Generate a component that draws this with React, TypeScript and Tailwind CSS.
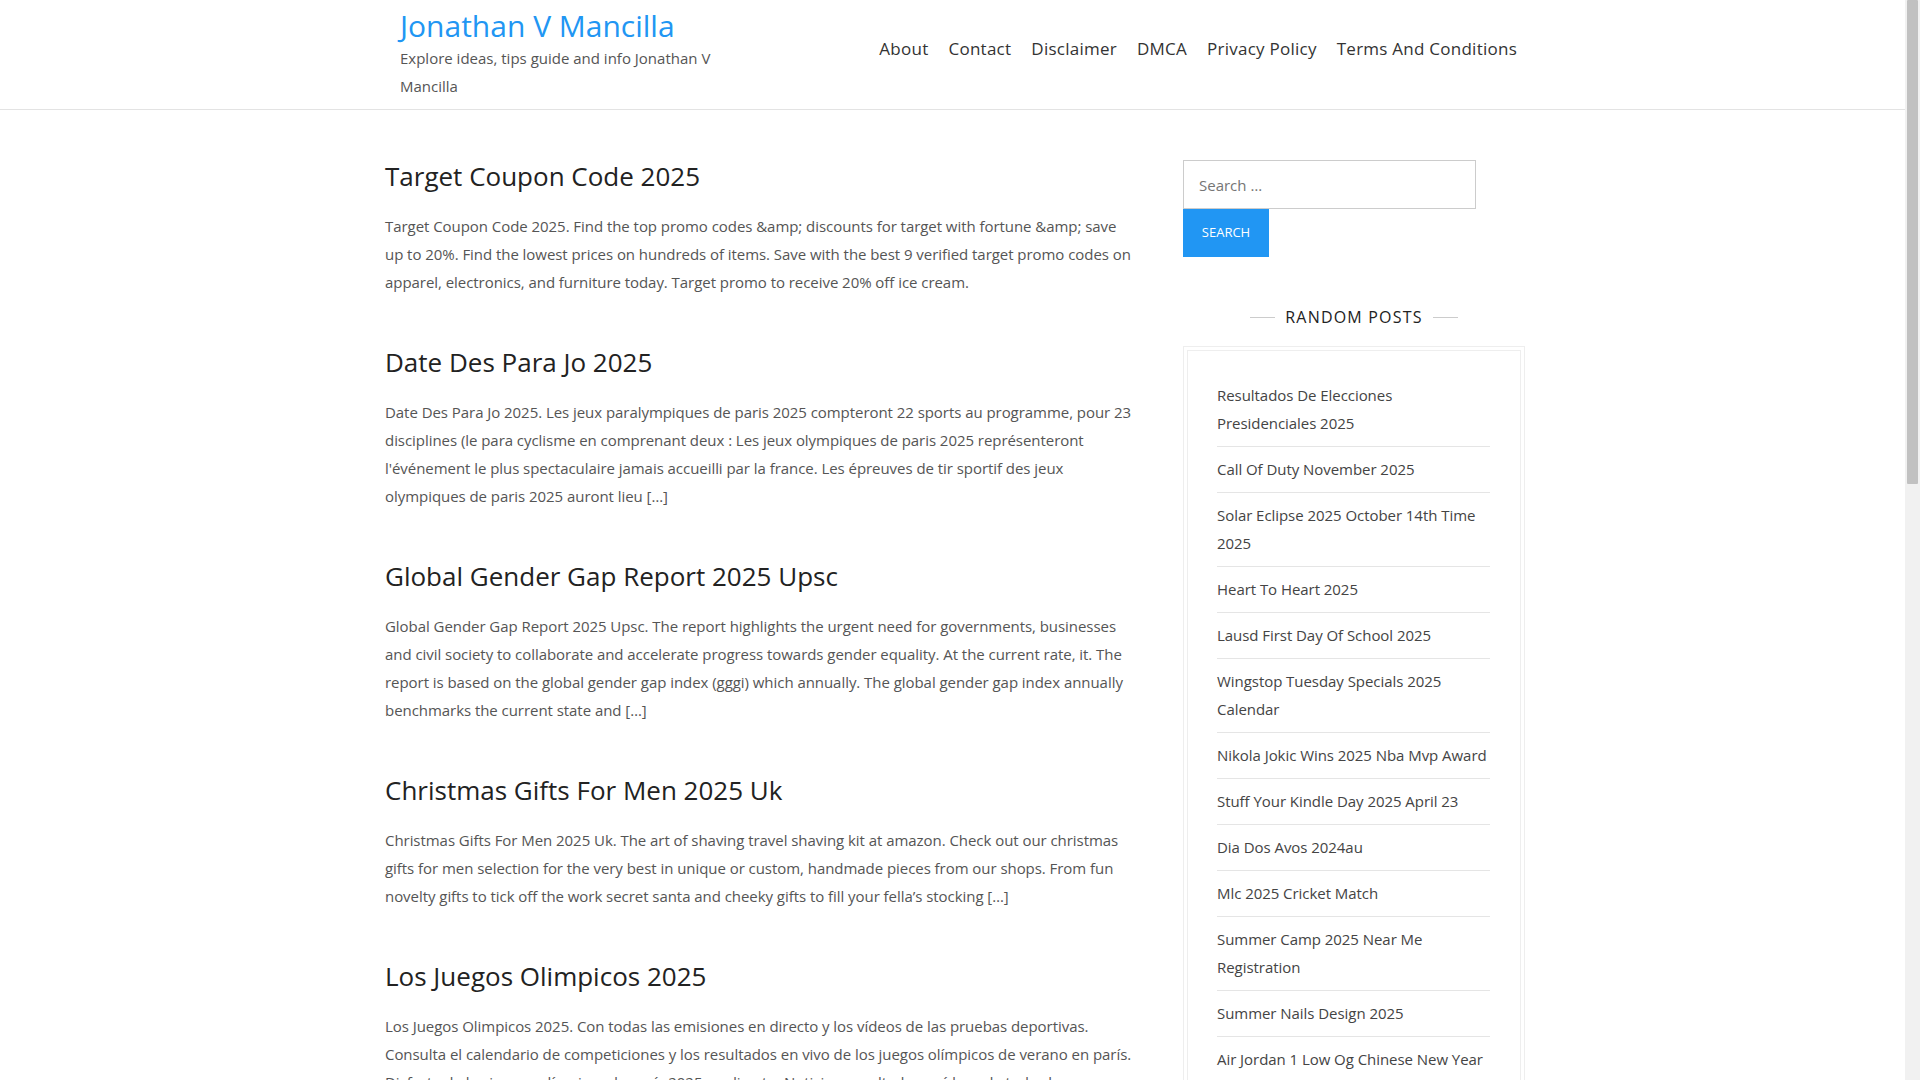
const FONT = { fontFamily: '"Open Sans", "Noto Sans", Arial, sans-serif' };

const NAV = ["About", "Contact", "Disclaimer", "DMCA", "Privacy Policy", "Terms And Conditions"];

const POSTS = [
  {
    title: "Target Coupon Code 2025",
    body: "Target Coupon Code 2025. Find the top promo codes &amp; discounts for target with fortune &amp; save up to 20%. Find the lowest prices on hundreds of items. Save with the best 9 verified target promo codes on apparel, electronics, and furniture today. Target promo to receive 20% off ice cream.",
  },
  {
    title: "Date Des Para Jo 2025",
    body: "Date Des Para Jo 2025. Les jeux paralympiques de paris 2025 compteront 22 sports au programme, pour 23 disciplines (le para cyclisme en comprenant deux : Les jeux olympiques de paris 2025 représenteront l'événement le plus spectaculaire jamais accueilli par la france. Les épreuves de tir sportif des jeux olympiques de paris 2025 auront lieu […]",
  },
  {
    title: "Global Gender Gap Report 2025 Upsc",
    body: "Global Gender Gap Report 2025 Upsc. The report highlights the urgent need for governments, businesses and civil society to collaborate and accelerate progress towards gender equality. At the current rate, it. The report is based on the global gender gap index (gggi) which annually. The global gender gap index annually benchmarks the current state and […]",
  },
  {
    title: "Christmas Gifts For Men 2025 Uk",
    body: "Christmas Gifts For Men 2025 Uk. The art of shaving travel shaving kit at amazon. Check out our christmas gifts for men selection for the very best in unique or custom, handmade pieces from our shops. From fun novelty gifts to tick off the work secret santa and cheeky gifts to fill your fella’s stocking […]",
  },
  {
    title: "Los Juegos Olimpicos 2025",
    body: "Los Juegos Olimpicos 2025. Con todas las emisiones en directo y los vídeos de las pruebas deportivas. Consulta el calendario de competiciones y los resultados en vivo de los juegos olímpicos de verano en parís. Disfruta de los juegos olímpicos de parís 2025 en directo. Noticias, resultados y vídeos de todas las disciplinas […]",
  },
];

const RANDOM = [
  "Resultados De Elecciones Presidenciales 2025",
  "Call Of Duty November 2025",
  "Solar Eclipse 2025 October 14th Time 2025",
  "Heart To Heart 2025",
  "Lausd First Day Of School 2025",
  "Wingstop Tuesday Specials 2025 Calendar",
  "Nikola Jokic Wins 2025 Nba Mvp Award",
  "Stuff Your Kindle Day 2025 April 23",
  "Dia Dos Avos 2024au",
  "Mlc 2025 Cricket Match",
  "Summer Camp 2025 Near Me Registration",
  "Summer Nails Design 2025",
  "Air Jordan 1 Low Og Chinese New Year",
  "Ramadan 2025 Calendar Dubai",
];

export default function App() {
  return (
    <div className="min-h-screen w-[1910px] bg-white text-[#555]" style={FONT}>
      <header className="border-b border-[#e3e3e3]">
        <div className="mx-auto flex w-[1140px] items-start">
          <div className="w-[332px] pl-[15px] pt-[8px] pb-[9px]">
            <a className="block text-[30px] font-medium leading-[36px] text-[#2196f3]">
              Jonathan V Mancilla
            </a>
            <p className="text-[15px] leading-[28px] text-[#555]">
              Explore ideas, tips guide and info Jonathan V Mancilla
            </p>
          </div>
          <nav className="ml-auto flex gap-[20px] pr-[8px] pt-[37px]">
            {NAV.map((item) => (
              <a key={item} className="text-[17px] font-medium leading-[24px] tracking-[0.25px] text-[#333]">
                {item}
              </a>
            ))}
          </nav>
        </div>
      </header>

      <div className="mx-auto flex w-[1140px]">
        <main className="w-[750px] pt-[50px]">
          {POSTS.map((post) => (
            <article key={post.title} className="mb-[50px]">
              <h2 className="text-[26px] font-medium leading-[32px] text-[#222]">{post.title}</h2>
              <p className="mt-[20px] text-[15px] leading-[28px] tracking-[-0.05px] text-[#555]">{post.body}</p>
            </article>
          ))}
        </main>

        <aside className="ml-auto w-[342px] pt-[50px]">
          <form className="flex flex-col items-start">
            <input
              type="search"
              placeholder="Search …"
              className="h-[49px] w-[293px] border border-[#ccc] px-[15px] text-[15px] text-[#555] outline-none placeholder:text-[#757575]"
              style={FONT}
            />
            <button
              type="button"
              className="h-[48px] w-[86px] bg-[#2196f3] text-[13px] font-medium uppercase text-white"
              style={FONT}
            >
              Search
            </button>
          </form>

          <div className="mt-[46px] flex items-center justify-center gap-[10px]">
            <span className="h-px w-[25px] bg-[#ccc]" />
            <h3 className="text-[16px] font-medium uppercase leading-[28px] tracking-[1.2px] text-[#222]">
              Random Posts
            </h3>
            <span className="h-px w-[25px] bg-[#ccc]" />
          </div>

          <div className="mt-[15px] border border-[#eee] p-[3px]">
            <ul className="border border-[#eee] pl-[29px] pr-[30px] pt-[22px] pb-[20px]">
              {RANDOM.map((item) => (
                <li
                  key={item}
                  className="border-b border-[#e5e5e5] pt-2 pb-[9px] text-[15px] leading-[28px] tracking-[-0.05px] text-[#444]"
                >
                  <a>{item}</a>
                </li>
              ))}
            </ul>
          </div>
        </aside>
      </div>

      {/* page scrollbar, as in the screenshot */}
      <div className="fixed right-0 top-0 h-screen w-[15px] bg-[#f1f1f1]">
        <div className="mx-[2px] h-[484px] rounded-[1px] bg-[#c1c1c1]" />
      </div>
    </div>
  );
}
